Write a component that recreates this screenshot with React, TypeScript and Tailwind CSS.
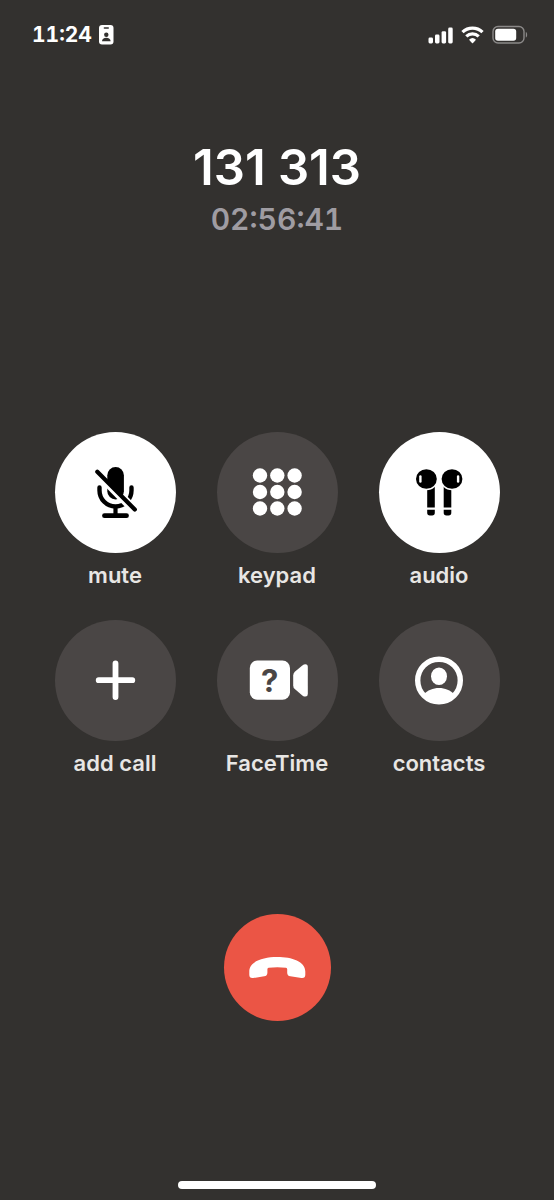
import type { ReactNode } from "react";

function StatusBar() {
  return (
    <header className="flex h-[70px] items-center justify-between pl-8 pr-[26px] text-white">
      <div className="flex items-center gap-[7px]">
        <time className="text-[21px] leading-7 font-bold tabular-nums">11:24</time>
        <svg width="15" height="20" viewBox="0 0 15 20" aria-hidden="true">
          <rect width="14.5" height="19.5" rx="3" fill="#fff" />
          <rect x="4.6" y="2.2" width="5.4" height="1.6" rx=".8" fill="#33312f" />
          <circle cx="7.3" cy="9.8" r="2.2" fill="#33312f" />
          <path d="M3 16.3c0-2.400 1.800-3.600 4.300-3.600s4.300 1.200 4.300 3.600z" fill="#33312f" />
        </svg>
      </div>
      <div className="flex items-center gap-2">
        <svg width="25" height="18" viewBox="0 0 25 18" fill="#fff" aria-label="Signal">
          <rect x="0.500" y="11.500" width="4.500" height="6" rx="1.400" />
          <rect x="7" y="8.500" width="4.500" height="9" rx="1.400" />
          <rect x="13.600" y="5.200" width="4.500" height="12.300" rx="1.400" />
          <rect x="20.200" y="1.500" width="4.500" height="16" rx="1.400" />
        </svg>
        <svg width="23" height="18" viewBox="0 0 23 18" aria-label="Wi-Fi">
          <path d="M1.500 6.100a14.500 14.500 0 0 1 20 0" fill="none" stroke="#fff" strokeWidth="3.300" />
          <path d="M5.300 10.300a9 9 0 0 1 12.400 0" fill="none" stroke="#fff" strokeWidth="3.200" />
          <path d="M8 13.700a5.200 5.200 0 0 1 7 0L12 16.900q-.5.500-1 0z" fill="#fff" />
        </svg>
        <svg width="36" height="20" viewBox="0 0 36 20" aria-label="Battery">
          <rect x="1" y="1.500" width="31" height="16.500" rx="5" fill="none" stroke="#8b8988" strokeWidth="1.400" />
          <rect x="3.200" y="3.800" width="21" height="12" rx="2.800" fill="#fff" />
          <path d="M33.800 7c1.800.5 1.800 5 0 5.500z" fill="#8b8988" />
        </svg>
      </div>
    </header>
  );
}

function MuteIcon() {
  return (
    <svg viewBox="0 0 121 121" aria-hidden="true">
      <rect x="52.300" y="35" width="16.600" height="32.500" rx="8.300" fill="#000" />
      <path d="M44.500 55.500v3a16 16 0 0 0 32 0v-3" fill="none" stroke="#000" strokeWidth="4.400" strokeLinecap="round" />
      <path d="M60.500 75v9" stroke="#000" strokeWidth="4.200" />
      <path d="M49.500 83.700h22" stroke="#000" strokeWidth="4.800" strokeLinecap="round" />
      <path d="M51.500 52.500 76 77.300" stroke="#fff" strokeWidth="5" />
      <path d="M70 65.400 80 75.400" stroke="#fff" strokeWidth="4.500" />
      <path d="M42.300 39.800 79.800 77.500" stroke="#000" strokeWidth="4.200" strokeLinecap="round" />
    </svg>
  );
}

function KeypadIcon() {
  return (
    <svg viewBox="0 0 121 121" fill="#fff" aria-hidden="true">
      {[43.500, 60, 76.500].map((y) =>
        [43, 60.300, 77.600].map((x) => <circle key={`${x}-${y}`} cx={x} cy={y} r="7.200" />),
      )}
    </svg>
  );
}

function EarbudsIcon() {
  return (
    <svg viewBox="0 0 121 121" aria-hidden="true">
      <path d="M48.200 54h7.600v21.400h-7.600zM64.700 54h7.600v21.400h-7.600z" />
      <path d="M48.200 77.700h7.600v3q0 2.700-2.700 2.700h-2.200q-2.700 0-2.700-2.700zM64.700 77.700h7.600v3q0 2.700-2.700 2.700h-2.200q-2.700 0-2.700-2.700z" />
      <ellipse cx="47.400" cy="47" rx="11.800" ry="11.200" fill="#fff" />
      <ellipse cx="73" cy="47" rx="11.800" ry="11.200" fill="#fff" />
      <ellipse cx="47.400" cy="47" rx="10.400" ry="9.800" />
      <ellipse cx="73" cy="47" rx="10.400" ry="9.800" />
      <rect x="40.200" y="43.200" width="2.400" height="7.600" rx="1.200" fill="#fff" />
      <rect x="77.900" y="43.200" width="2.400" height="7.600" rx="1.200" fill="#fff" />
    </svg>
  );
}

function PlusIcon() {
  return (
    <svg viewBox="0 0 121 121" aria-hidden="true">
      <path d="M60.500 43.500v33.500M43.700 60.200h33.600" stroke="#fff" strokeWidth="5.800" strokeLinecap="round" />
    </svg>
  );
}

function FaceTimeIcon() {
  return (
    <svg viewBox="0 0 121 121" aria-hidden="true">
      <rect x="32.800" y="40.500" width="40.200" height="39.200" rx="7.500" fill="#fff" />
      <path d="M76.200 55.500q0-2.200 1.600-3.700l7.500-6.300q1.600-1.200 3.200-1.200 2.300 0 2.300 2.700v27q0 2.600-2.300 2.600-1.600 0-3.200-1.200l-7.500-6.300q-1.600-1.500-1.600-3.700z" fill="#fff" />
      <text x="52.800" y="71.500" textAnchor="middle" fontSize="31" fontWeight="700" fill="#4a4645">?</text>
    </svg>
  );
}

function ContactsIcon() {
  return (
    <svg viewBox="0 0 121 121" aria-hidden="true">
      <circle cx="60" cy="60.500" r="21.300" fill="none" stroke="#fff" strokeWidth="5.400" />
      <ellipse cx="60" cy="56.300" rx="8" ry="8.800" fill="#fff" />
      <path d="M44.500 74.500c4-4.200 9.500-6.500 15.500-6.500s11.500 2.300 15.500 6.500a21.300 21.300 0 0 1-31 0z" fill="#fff" />
    </svg>
  );
}

function CallButton({ label, active = false, children }: { label: string; active?: boolean; children: ReactNode }) {
  return (
    <button type="button" aria-pressed={active} className="flex flex-col items-center gap-2">
      <span className={active ? "block size-[121px] rounded-full bg-white" : "block size-[121px] rounded-full bg-[#4a4645]"}>
        {children}
      </span>
      <span className="text-[22px] leading-7 font-semibold whitespace-nowrap text-[#e8e6e4]">{label}</span>
    </button>
  );
}

export default function App() {
  return (
    <main className="flex min-h-screen flex-col bg-[#33312f] font-['Inter',sans-serif]">
      <StatusBar />
      <section className="flex flex-col items-center pt-[68px] text-center">
        <h1 className="text-[49px] leading-[60px] font-semibold text-white">131 313</h1>
        <p className="text-[30px] leading-[42px] font-semibold text-[#9f9ca2] tabular-nums">02:56:41</p>
      </section>
      <section aria-label="Call controls" className="mt-[192px] grid grid-cols-[repeat(3,121px)] justify-center gap-x-[41px] gap-y-[31px]">
        <CallButton label="mute" active><MuteIcon /></CallButton>
        <CallButton label="keypad"><KeypadIcon /></CallButton>
        <CallButton label="audio" active><EarbudsIcon /></CallButton>
        <CallButton label="add call"><PlusIcon /></CallButton>
        <CallButton label="FaceTime"><FaceTimeIcon /></CallButton>
        <CallButton label="contacts"><ContactsIcon /></CallButton>
      </section>
      <div className="mt-[137px] flex justify-center">
        <button type="button" aria-label="End call" className="size-[107px] rounded-full bg-[#eb5545]">
          <svg viewBox="0 0 107 107" aria-hidden="true">
            <path d="M53.300 43C68 43 81.300 47.500 81.300 57.500v3.300q0 3.700-3.900 3.200l-11-1.700q-3.200-.6-3.200-3.600v-3.500q0-1.200-1.200-1.400-8.700-1.300-17.400 0-1.200.2-1.200 1.400v3.500q0 3-3.200 3.600l-11 1.700q-3.900.5-3.900-3.200v-3.300C25.300 47.500 38.600 43 53.300 43z" fill="#fff" />
          </svg>
        </button>
      </div>
      <footer className="mt-auto flex justify-center pb-[11px]">
        <div className="h-2 w-[198px] rounded-full bg-white" />
      </footer>
    </main>
  );
}
